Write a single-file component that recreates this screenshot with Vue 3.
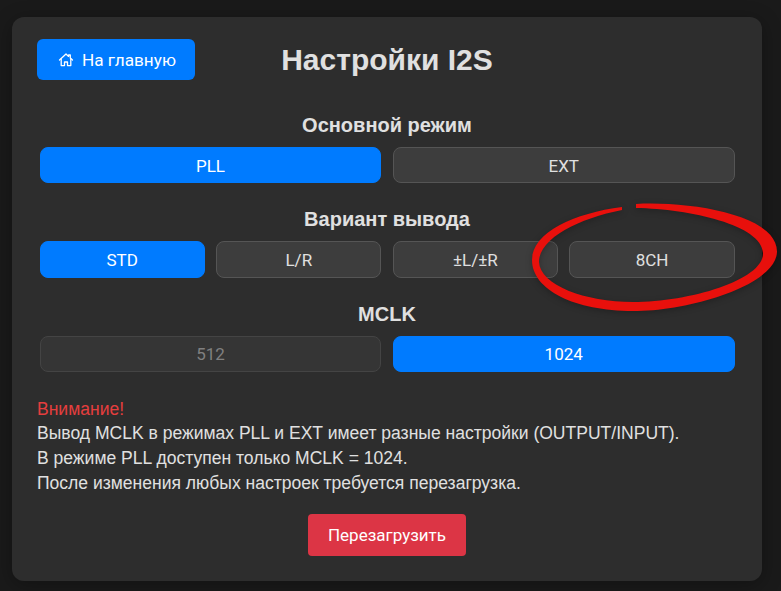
<script setup>
const modes = [
  { label: "PLL", active: true },
  { label: "EXT" },
];
const outputs = [
  { label: "STD", active: true },
  { label: "L/R" },
  { label: "±L/±R" },
  { label: "8CH" },
];
const mclk = [
  { label: "512", disabled: true },
  { label: "1024", active: true },
];
</script>

<template>
  <div class="page">
    <div class="card">
      <div class="header">
        <button class="home-btn">
          <svg class="home-icon" viewBox="0 0 16 16" width="16" height="16" fill="none" stroke="currentColor" stroke-width="1.3" stroke-linejoin="round" stroke-linecap="round">
            <path d="M1.5 8 8 2l2.6 2.4V3h1.7v3L14.5 8" />
            <path d="M3.2 7v6.6h3.3V10h3v3.6h3.3V7" />
          </svg>
          <span>На главную</span>
        </button>
        <h1 class="title">Настройки I2S</h1>
      </div>

      <h3 class="group-title first">Основной режим</h3>
      <div class="options cols-2">
        <button v-for="m in modes" :key="m.label" class="opt" :class="{ active: m.active }">{{ m.label }}</button>
      </div>

      <h3 class="group-title">Вариант вывода</h3>
      <div class="options cols-4">
        <button v-for="o in outputs" :key="o.label" class="opt" :class="{ active: o.active }">{{ o.label }}</button>
      </div>

      <h3 class="group-title">MCLK</h3>
      <div class="options cols-2">
        <button v-for="c in mclk" :key="c.label" class="opt" :class="{ active: c.active, disabled: c.disabled }">{{ c.label }}</button>
      </div>

      <div class="notice">
        <div class="warn">Внимание!</div>
        <div>Вывод MCLK в режимах PLL и EXT имеет разные настройки (OUTPUT/INPUT).</div>
        <div>В режиме PLL доступен только MCLK = 1024.</div>
        <div>После изменения любых настроек требуется перезагрузка.</div>
      </div>

      <div class="reload-row">
        <button class="reload-btn">Перезагрузить</button>
      </div>

      <!-- red marker ring drawn over the screenshot -->
      <svg class="ring" viewBox="0 0 260 140" width="260" height="140">
        <path fill="#e8100c" d="M116 24 C170 21 258 35 257 72 C256 105 170 131 113 131 C55 131 12 110 12 80 C12 52 55 33 102 27 L102 30 C60 38 19 58 19 82 C20 105 65 122 113 122 C170 122 244 100 243 73 C242 45 170 29 116 28 Z" />
      </svg>
    </div>
  </div>
</template>

<style>
html,
body {
  margin: 0;
  background: #1a1a1a;
}
</style>

<style scoped>
.page {
  width: 781px;
  height: 591px;
  padding: 17px 0 0 12px;
  box-sizing: border-box;
  overflow: hidden;
  font-family: "Liberation Sans", Arial, sans-serif;
}

.card {
  position: relative;
  width: 750px;
  height: 564px;
  box-sizing: border-box;
  padding: 22px 25px 0;
  background: #2d2d2d;
  border-radius: 12px;
  color: #e0e0e0;
  box-shadow: 0 4px 20px rgba(0, 0, 0, 0.3);
}

button {
  font-family: Roboto, sans-serif;
  cursor: pointer;
}

.header {
  display: grid;
  grid-template-columns: 1fr auto 1fr;
  align-items: center;
  height: 41px;
}

.home-btn {
  justify-self: start;
  display: flex;
  align-items: center;
  gap: 8px;
  width: 158px;
  height: 41px;
  padding: 0 0 0 21px;
  border: none;
  border-radius: 6px;
  background: #007bff;
  color: #fff;
  font-size: 17.2px;
}

.home-icon {
  flex: none;
}

.title {
  margin: 0;
  font-size: 30px;
  line-height: 41px;
  font-weight: 700;
  color: #e0e0e0;
}

.group-title {
  margin: 25px 0 10px;
  height: 23px;
  font-size: 20px;
  line-height: 23px;
  font-weight: 700;
  text-align: center;
  color: #e0e0e0;
}

.group-title.first {
  margin-top: 34px;
}

.options {
  display: grid;
  gap: 11.4px;
  margin: 0 2.4px 0 2.6px;
}

.cols-2 {
  grid-template-columns: repeat(2, 1fr);
}

.cols-4 {
  grid-template-columns: repeat(4, 1fr);
}

.opt {
  height: 36.4px;
  padding: 1px 0 0;
  border: 1px solid #555;
  border-radius: 8px;
  background: #3d3d3d;
  color: #e0e0e0;
  font-size: 17px;
}

.opt.active {
  border-color: #007bff;
  background: #007bff;
  color: #fff;
}

.opt.disabled {
  border-color: #444;
  background: #353535;
  color: #808080;
}

.notice {
  margin-top: 24.6px;
  font-size: 17.55px;
  line-height: 24.64px;
  color: #e0e0e0;
}

.warn {
  color: #e53e3e;
}

.reload-row {
  display: flex;
  justify-content: center;
  margin-top: 19px;
}

.reload-btn {
  width: 158px;
  height: 42px;
  padding: 0;
  border: none;
  border-radius: 4px;
  background: #dc3545;
  color: #fff;
  font-size: 17px;
}

.ring {
  position: absolute;
  left: 508px;
  top: 163px;
  filter: drop-shadow(0 2px 3px rgba(0, 0, 0, 0.25));
  pointer-events: none;
}
</style>
